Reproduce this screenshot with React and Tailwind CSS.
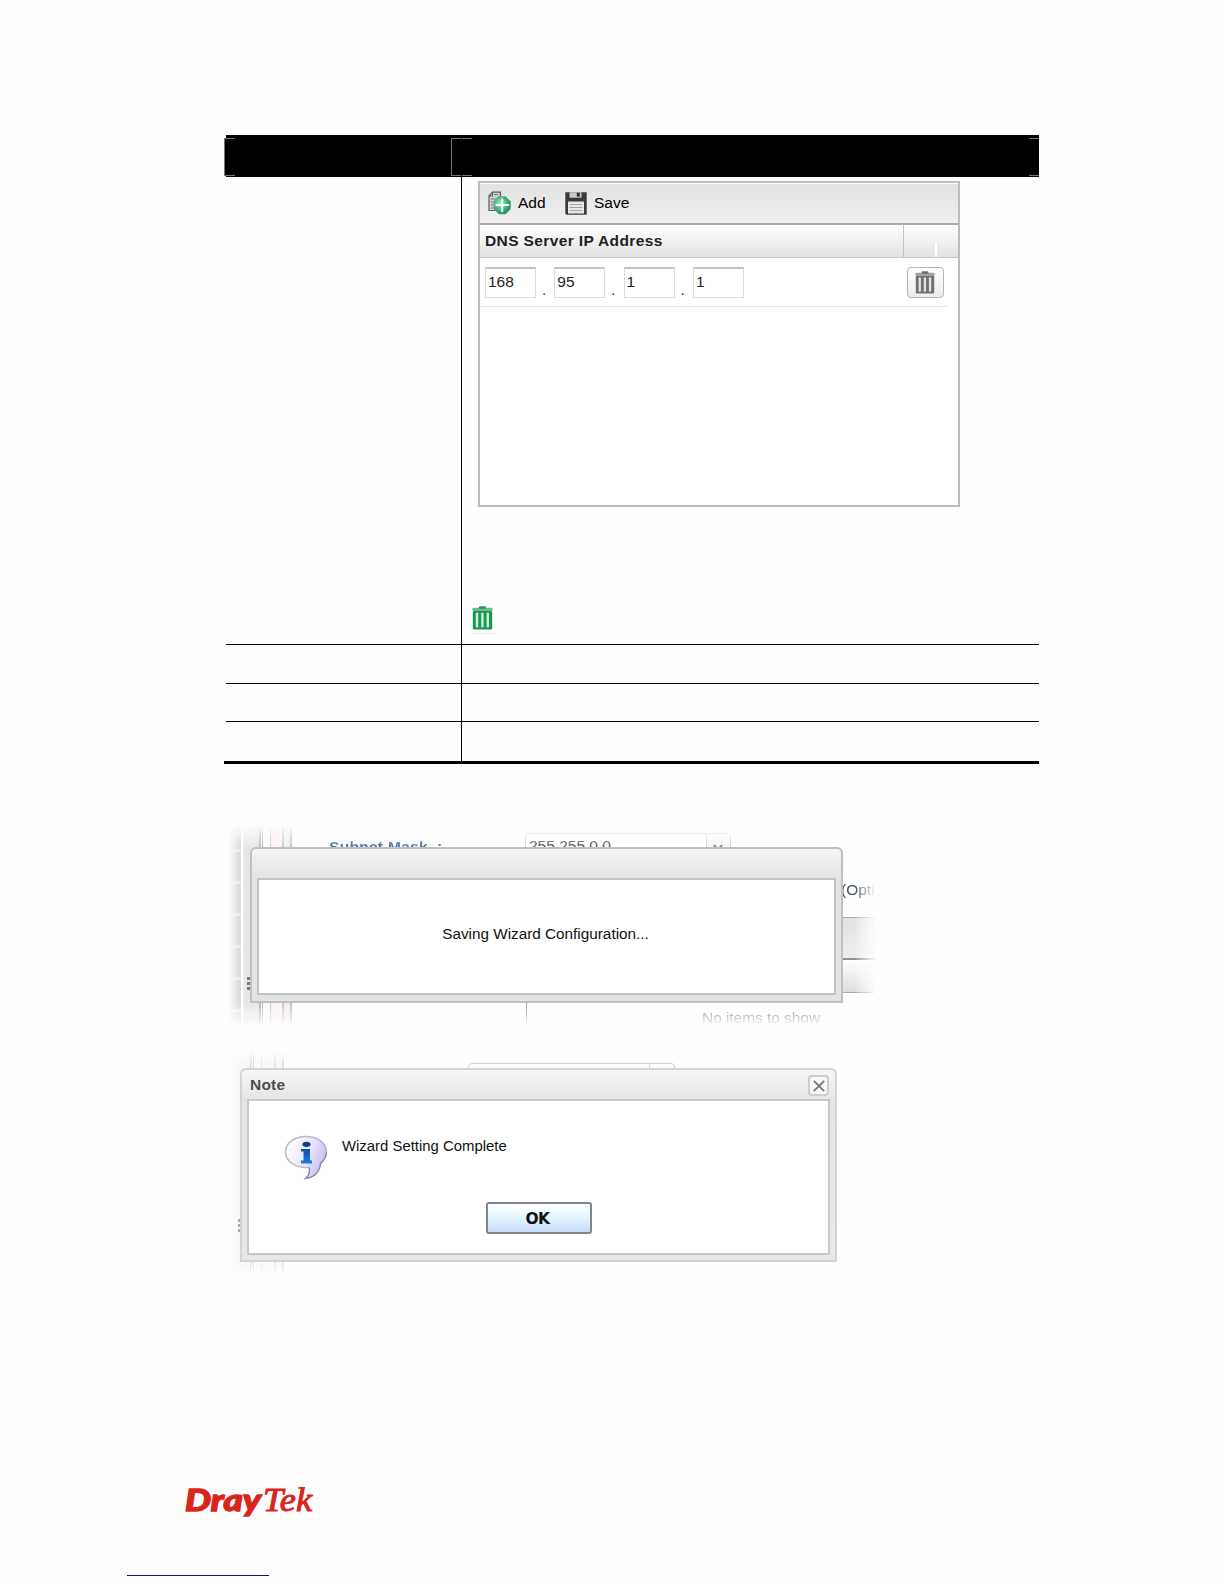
import React from "react";

function TrashIcon({ color, light, className }) {
  return (
    <svg viewBox="0 0 21 24" className={className}>
      <rect x="7" y="0.3" width="7" height="2.4" rx="1" fill={color} />
      <rect x="0.4" y="1.8" width="20.2" height="3.2" rx="1" fill={color} opacity="0.65" />
      <rect x="0.8" y="5" width="19.4" height="18.6" rx="1.4" fill={color} />
      <rect x="3.8" y="6.6" width="2.4" height="15" rx="1" fill={light} />
      <rect x="9.2" y="6.6" width="2.4" height="15" rx="1" fill={light} />
      <rect x="14.6" y="6.6" width="2.4" height="15" rx="1" fill={light} />
    </svg>
  );
}

function AddIcon() {
  return (
    <svg viewBox="0 0 23 24" className="h-6 w-[23px]">
      <defs>
        <radialGradient id="addGreen" cx="0.4" cy="0.4" r="0.65">
          <stop offset="0" stopColor="#a4ecc6" />
          <stop offset="0.6" stopColor="#3fb678" />
          <stop offset="1" stopColor="#168447" />
        </radialGradient>
      </defs>
      <path d="M4.5 1.2H12.5V19.5H1V4.8Z" fill="#cfcfcf" stroke="#5c5c5c" strokeWidth="1.2" />
      <path d="M4.5 1.2V5H1" fill="none" stroke="#555" strokeWidth="1" />
      <path d="M3 8H10M3 11H10M3 14H10M3 17H10M6 3.5H10" stroke="#7d7d7d" strokeWidth="1.2" />
      <path d="M10.5 5.5H17.5L22.4 10.4V18L17.5 23H11L6 18V10.4Z" fill="url(#addGreen)" stroke="#5fae85" strokeWidth="0.7" />
      <path d="M14.2 7.5V21M7.5 14H21" stroke="#fff" strokeWidth="2" />
    </svg>
  );
}

function SaveIcon() {
  return (
    <svg viewBox="0 0 22 23" className="h-[23px] w-[22px]">
      <path d="M0.3 0.3H21.7V22.7H1.6L0.3 21.4Z" fill="#3a3a3c" />
      <rect x="4.500" y="0.3" width="12" height="5.4" fill="#c9c9c9" />
      <rect x="11.8" y="0.8" width="3" height="3.8" fill="#2c2c2e" />
      <rect x="3" y="9.5" width="16" height="12" fill="#e9e9e9" />
      <path d="M4.500 12.5H17.500M4.500 15.5H17.500M4.500 18.5H17.500" stroke="#a5a5a5" strokeWidth="1.1" />
    </svg>
  );
}

function InfoIcon() {
  return (
    <svg viewBox="0 0 44 45" className="h-[45px] w-11">
      <defs>
        <linearGradient id="bubble" x1="0" y1="0" x2="1" y2="0.4">
          <stop offset="0.2" stopColor="#fbfbff" />
          <stop offset="0.65" stopColor="#e6e3fb" />
          <stop offset="1" stopColor="#c6c2f1" />
        </linearGradient>
        <linearGradient id="infoBlue" x1="0" y1="0" x2="0" y2="1">
          <stop offset="0" stopColor="#0c4dae" />
          <stop offset="1" stopColor="#1b7be8" />
        </linearGradient>
      </defs>
      <path
        d="M22 1.5C33.5 1.5 42.5 8 42.5 17C42.5 22 40 25.5 36.500 28.5C36 36 31 42 21.5 43.5C25.5 40 26.5 36.5 25 32.5C11.500 33.5 1.500 26 1.500 17C1.500 8 10.500 1.500 22 1.500Z"
        fill="url(#bubble)"
        stroke="#b5b4c8"
        strokeWidth="1.4"
      />
      <path d="M42.5 17C42.5 22 40 25.5 36.5 28.5C36 36 31 42 21.5 43.5C25.5 40 26.5 36.5 25 32.5" fill="none" stroke="#88879a" strokeWidth="1.200" />
      <ellipse cx="22.5" cy="9.3" rx="4" ry="2.6" fill="#0b3d91" />
      <path d="M17 14H26V25.500H28V28.500H17V25.500H19.500V16.500H17Z" fill="url(#infoBlue)" />
    </svg>
  );
}

function Octet({ value, last }) {
  return (
    <>
      <div className="h-[31px] w-[51px] shrink-0 border border-[#d9dddd] border-t-2 border-t-[#c0c4c6] bg-white pl-[2px] text-[15.5px] leading-[25px]">
        {value}
      </div>
      {!last && <span className="mb-[9px] w-[18.3px] shrink-0 self-end pl-[6px] text-[15px] leading-[14px]">.</span>}
    </>
  );
}

function DnsPanel() {
  return (
    <div className="ml-4 mt-1 flex h-[326px] w-[482px] flex-col border-2 border-[#bcbcbc] bg-white">
      <div className="flex h-10 shrink-0 items-center border-t border-white bg-gradient-to-b from-[#e3e3e3] to-[#efefef] pb-px pl-[8px] text-[15.5px]">
        <AddIcon />
        <span className="ml-[7px] w-[47px]">Add</span>
        <SaveIcon />
        <span className="ml-[7px]">Save</span>
      </div>
      <div className="flex h-[35px] shrink-0 border-b border-t-2 border-b-[#c6c6c6] border-t-[#adadad] bg-gradient-to-b from-white to-[#e2e2e2] text-[15.5px] font-bold tracking-[0.38px]">
        <div className="w-[424px] border-r border-[#c4c4c4] pl-[5px] leading-[32px] text-[#222]">DNS Server IP Address</div>
        <div className="mt-[18px] w-[33px] border-r-2 border-white" />
      </div>
      <div className="flex h-[49px] w-[468px] shrink-0 items-center border-b border-[#e4e6e6] pl-[5px] text-[#222]">
        <Octet value="168" />
        <Octet value="95" />
        <Octet value="1" />
        <Octet value="1" last />
        <div className="ml-auto mr-[4px] flex h-[31px] w-[37px] items-center justify-center rounded border border-[#b5b5b5] bg-gradient-to-b from-white to-[#ececec] pr-px">
          <TrashIcon color="#707070" light="#e2e2e2" className="h-[23px] w-5" />
        </div>
      </div>
    </div>
  );
}

function HeaderRow() {
  return (
    <div className="ml-[2px] h-[42px] bg-black pt-[3px]">
      <div className="-ml-[2px] flex h-[38px] bg-black">
        <div className="flex w-[227px] border-l border-[#777]">
          <div className="w-[10px] border-y border-[#777]" />
        </div>
        <div className="flex flex-1 justify-between border-l border-[#777]">
          <div className="flex gap-px">
            <div className="w-[9px] border-y border-[#777]" />
            <div className="w-[10px] border-y border-[#777]" />
          </div>
          <div className="w-[10px] border-y border-[#777]" />
        </div>
      </div>
    </div>
  );
}

function EmptyRow({ className }) {
  return (
    <div className={"ml-[2px] flex " + className}>
      <div className="w-[236px] border-r border-black" />
    </div>
  );
}

function SavingFigure() {
  return (
    <section className="relative ml-[224px] mt-[56px] h-[210px] w-[660px] overflow-hidden">
      <div className="absolute inset-0 [mask-image:linear-gradient(to_bottom,transparent_5px,black_28px,black_183px,transparent_206px)]">
        <div className="absolute inset-y-0 left-0 flex [mask-image:linear-gradient(to_right,transparent_4px,black_22px)]">
          <div className="w-[17px] bg-[repeating-linear-gradient(to_bottom,#c9c9cf_0,#c9c9cf_29px,#e3e3f2_30px,#e3e3f2_32px)]" />
          <div className="w-[2px] bg-white" />
          <div className="w-[16px] bg-[#e6e6e6]" />
          <div className="w-[2px] bg-[#b8b8b8]" />
          <div className="w-px bg-white" />
          <div className="w-px bg-[#b0b0b0]" />
          <div className="w-[7px] bg-[#f8f8f8]" />
          <div className="w-px bg-[#c4c4c4]" />
          <div className="w-[11px] bg-[#fdf0f0]" />
          <div className="w-[2px] bg-[#c8c8c8]" />
          <div className="w-[6px] bg-[#eeeeee]" />
          <div className="w-[2px] bg-[#c0c0c0]" />
        </div>
        <div className="absolute left-[105px] top-[17px] text-[15.5px] font-bold leading-5 tracking-[0.3px] text-[#3f6b9b]">Subnet Mask&nbsp; :</div>
        <div className="absolute left-[301px] top-[13px] flex h-7 w-[206px] rounded-t-sm border border-[#cfcfcf] bg-white pl-[3px] text-[15.5px] leading-[23px] text-[#444]">
          <span className="w-[177px]">255.255.0.0</span>
          <span className="flex-1 border-l border-[#cfcfcf] bg-gradient-to-b from-white to-[#e4e4e4] pl-[5px] pt-[10px]">
            <svg viewBox="0 0 12 8" className="h-2 w-3"><path d="M2 1L6 6L10 1" fill="none" stroke="#777" strokeWidth="2" /></svg>
          </span>
        </div>
        <div className="absolute left-[302px] top-[180px] h-7 w-px bg-[#999]" />
        <div className="absolute left-[478px] top-[188px] text-[15.5px] leading-5 tracking-[-0.05px] text-[#777]">No items to show</div>
        <div className="absolute left-[610px] top-0 h-full w-[50px] [mask-image:linear-gradient(to_right,black_20px,transparent_42px)]">
          <div className="pl-[7px] pt-[60px] text-[15.5px] leading-5 text-[#3f4d5c]">(Opti</div>
          <div className="mt-[17px] h-[43px] border-b-2 border-t border-b-[#909090] border-t-[#aaa] bg-gradient-to-b from-[#e2e2e2] to-[#efefef]" />
          <div className="h-[33px] border-b border-[#aaa] bg-gradient-to-b from-white to-[#dedede]" />
        </div>
        <div className="absolute left-[23px] top-[157px] flex flex-col gap-[2px]">
          <div className="h-[3px] w-1 bg-[#777]" />
          <div className="h-[3px] w-1 bg-[#777]" />
          <div className="h-[3px] w-1 bg-[#777]" />
        </div>
      </div>
      <div className="relative ml-[26px] mt-[27px] h-[156px] w-[593px] rounded-t-md border-2 border-[#c0c0c0] bg-[linear-gradient(to_bottom,#f5f5f5_0,#e3e3e3_30px,#e3e3e3_100%)] px-[5px] pb-[6px] pt-[29px]">
        <div className="flex h-[117px] items-center justify-center border-2 border-[#c4c4c4] bg-white pb-[5px] pr-[2px] text-[15.3px] text-[#111]">
          Saving Wizard Configuration...
        </div>
      </div>
    </section>
  );
}

function NoteFigure() {
  return (
    <section className="relative ml-[224px] mt-[15px] h-[230px] w-[660px] overflow-hidden">
      <div className="absolute inset-0 [mask-image:linear-gradient(to_bottom,transparent_6px,black_26px,black_208px,transparent_230px)]">
        <div className="absolute inset-y-0 left-0 flex opacity-70 [mask-image:linear-gradient(to_right,transparent_4px,black_26px)]">
          <div className="w-[6px] bg-[#eee]" />
          <div className="w-[20px] bg-[#ececec]" />
          <div className="w-[2px] bg-[#c4c4c4]" />
          <div className="w-px bg-white" />
          <div className="w-px bg-[#b8b8b8]" />
          <div className="w-[7px] bg-[#f8f8f8]" />
          <div className="w-px bg-[#cccccc]" />
          <div className="w-[12px] bg-[#fdf3f1]" />
          <div className="w-[2px] bg-[#cccccc]" />
          <div className="w-[6px] bg-[#f3f3f3]" />
          <div className="w-[2px] bg-[#c4c4c4]" />
        </div>
        <div className="absolute left-[244px] top-[18px] flex h-5 w-[207px] rounded-t-sm border border-[#bbb] bg-white">
          <div className="ml-[180px] border-l border-[#ccc]" />
        </div>
        <div className="absolute left-[14px] top-[174px] flex flex-col gap-[2px]">
          <div className="h-[3px] w-[2px] bg-[#aaa]" />
          <div className="h-[3px] w-[2px] bg-[#aaa]" />
          <div className="h-[3px] w-[2px] bg-[#aaa]" />
        </div>
      </div>
      <div className="relative ml-4 mt-[23px] flex h-[194px] w-[597px] flex-col rounded-t-md border-2 border-[#d4d4d4] bg-[linear-gradient(to_bottom,#f6f6f6_0,#e5e5e5_30px,#e8e8e8_100%)] px-[5px] pb-[5px]">
        <div className="flex h-[29px] shrink-0 items-center justify-between pl-[3px]">
          <span className="text-[15.5px] font-bold tracking-[0.2px] text-[#4d4d4d]">Note</span>
          <span className="mr-px mt-[2px] flex h-[21px] w-[21px] items-center justify-center rounded border-2 border-[#cdcdcd] bg-[#f8f8f8]">
            <svg viewBox="0 0 12 12" className="h-3 w-3"><path d="M0.8 0.8L11.2 11.2M11.2 0.8L0.8 11.2" stroke="#777" strokeWidth="1.8" /></svg>
          </span>
        </div>
        <div className="flex-1 border-2 border-[#c8c8c8] bg-white pl-[35px] pt-[34px]">
          <div className="flex">
            <InfoIcon />
            <p className="ml-[14px] mt-px text-[14.9px] leading-5 text-[#111]">Wizard Setting Complete</p>
          </div>
          <div className="ml-[202px] mt-[22px] flex h-[32px] w-[106px] items-center justify-center rounded-[3px] border-2 border-[#7f858b] bg-gradient-to-b from-white via-[#e2f4ff] to-[#c6dcfc] pr-[3px] pt-[3px] font-['DejaVu_Sans'] text-[15.5px] font-bold tracking-[-0.6px] text-[#111]">
            OK
          </div>
        </div>
      </div>
    </section>
  );
}

export default function App() {
  return (
    <main className="h-[1584px] w-[1224px] overflow-hidden bg-[#fefefe] pt-[135px] font-['Liberation_Sans',Arial,sans-serif] text-black">
      <section className="ml-[224px] w-[815px]">
        <HeaderRow />
        <div className="ml-[2px] flex h-[468px] border-b border-black">
          <div className="w-[236px] shrink-0 border-r border-black" />
          <div>
            <DnsPanel />
            <div className="ml-[10px] mt-[99px] w-6 border-b border-[#ececec] pb-[3px]">
              <TrashIcon color="#1d9654" light="#c9f2da" className="h-6 w-[21px]" />
            </div>
          </div>
        </div>
        <EmptyRow className="h-[39px] border-b border-black" />
        <EmptyRow className="h-[38px] border-b border-black" />
        <EmptyRow className="h-[39px]" />
        <div className="h-[3px] bg-black" />
      </section>
      <SavingFigure />
      <NoteFigure />
      <footer>
        <svg viewBox="0 0 132 40" className="ml-[184px] mt-[210px] h-10 w-[132px] overflow-visible" fill="#d8261c">
          <text x="1" y="26" fontFamily="Lato" fontWeight="900" fontStyle="italic" fontSize="31" textLength="76" lengthAdjust="spacingAndGlyphs" stroke="#d8261c" strokeWidth="1.3">Dray</text>
          <text x="79" y="26" fontFamily="Liberation Serif" fontStyle="italic" fontSize="34" textLength="49" lengthAdjust="spacingAndGlyphs" stroke="#d8261c" strokeWidth="1">Tek</text>
        </svg>
        <div className="ml-[127px] mt-[50px] h-px w-[142px] bg-[#10108c]" />
      </footer>
    </main>
  );
}
